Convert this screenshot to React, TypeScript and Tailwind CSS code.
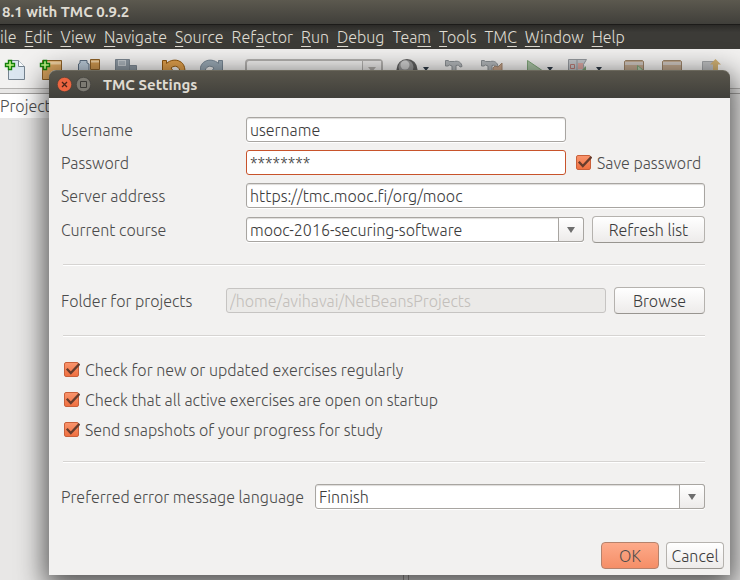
import React from "react";

const font = "font-['Ubuntu','Open_Sans','Noto_Sans',sans-serif]";

const menus: [string, string, string][] = [
  ["", "", "ile"],
  ["", "E", "dit"],
  ["", "V", "iew"],
  ["", "N", "avigate"],
  ["", "S", "ource"],
  ["Ref", "a", "ctor"],
  ["", "R", "un"],
  ["", "D", "ebug"],
  ["Tea", "m", ""],
  ["", "T", "ools"],
  ["TM", "C", ""],
  ["", "W", "indow"],
  ["", "H", "elp"],
];

const field =
  "block h-[25px] w-full min-w-0 rounded-[3px] border border-[#a8a5a1] bg-white px-[3px] text-base font-light text-[#3c3c3c] shadow-[inset_0_1px_1px_#dddbd9,0_1px_0_#fff] outline-none";

const button =
  "h-[27px] rounded-[4px] border border-[#b5b2ae] border-b-[#989590] bg-gradient-to-b from-white to-[#edebea] text-base font-light leading-5 text-[#3c3c3c]";

function ToolButton({ label, className, children }: { label: string; className: string; children: React.ReactNode }) {
  return (
    <button type="button" aria-label={label} className={`h-6 shrink-0 ${className}`}>
      <svg viewBox="0 0 24 24" className="h-6 w-6" fill="none">
        {children}
      </svg>
    </button>
  );
}

function MenuArrow({ label, className }: { label: string; className: string }) {
  return (
    <button type="button" aria-label={label} className={`h-6 w-[6px] shrink-0 ${className}`}>
      <svg viewBox="0 0 6 24" className="h-6 w-[6px]">
        <path d="M0 8h6L3 12z" fill="#2f3b47" />
      </svg>
    </button>
  );
}

function Plus() {
  return <path d="M4.500 1.500h3v3h3v3h-3v3h-3v-3h-3v-3h3z" fill="#c3f28a" stroke="#12800a" strokeWidth="1.400" />;
}

function Hammer() {
  return (
    <path
      d="M1.500 1.500h2.500l1.500 1h5c4-1 7 1 7.500 5l-2 .5c-1-2-2-2-4-1.500V20H8V7L5.500 6 4 7H1.500z"
      fill="#b3b7ba"
      stroke="#8b9094"
    />
  );
}

function Combo({ id, options }: { id: string; options: string[] }) {
  return (
    <div className="relative w-full min-w-0">
      <select id={id} className={`${field} appearance-none`}>
        {options.map((o) => (
          <option key={o}>{o}</option>
        ))}
      </select>
      <span className="pointer-events-none absolute inset-y-0 right-0 flex w-[26px] items-center justify-center rounded-r-[3px] border border-[#a8a5a1] bg-gradient-to-b from-white to-[#edebea]">
        <svg viewBox="0 0 8 6" className="mt-px h-[6px] w-2">
          <path d="M0 0h8L4 6z" fill="#6e6e6e" />
        </svg>
      </span>
    </div>
  );
}

function Check({ id, label }: { id: string; label: string }) {
  return (
    <label htmlFor={id} className="flex items-center gap-[5px] whitespace-nowrap">
      <span className="relative block h-4 w-4 shrink-0">
        <input
          id={id}
          type="checkbox"
          defaultChecked
          className="block h-[15px] w-[15px] appearance-none rounded-[2px] border border-[#c9603a] bg-gradient-to-b from-[#f9946c] to-[#ef7040]"
        />
        <svg viewBox="0 0 16 16" className="pointer-events-none absolute inset-0" fill="none">
          <path d="M2.800 6.800L6.800 11 15.500 1.800" stroke="#673c2c" strokeWidth="2.300" />
        </svg>
      </span>
      {label}
    </label>
  );
}

function Separator() {
  return <hr className="ml-0.5 h-[2px] border-0 border-t border-[#d6d4d2] bg-white" />;
}

export default function App() {
  return (
    <div className={`relative flex h-screen flex-col overflow-hidden bg-[#e8e7e6] text-base font-light leading-5 ${font}`}>
      <header className="flex h-6 shrink-0 items-center bg-gradient-to-b from-[#5c594f] to-[#403f3a] pl-0.5 text-[15px] font-bold text-[#dfdbd2]">
        8.1 with TMC 0.9.2
      </header>
      <nav className="flex h-[25px] shrink-0 items-center gap-2 border-t border-[#1c1b19] bg-gradient-to-b from-[#2b2a27] via-[#3c3b37] via-30% to-[#3c3b37] leading-[22px] text-[#dfdbd2]">
        {menus.map(([a, b, c]) => (
          <button key={a + b + c} type="button" className="whitespace-nowrap">
            {a}
            <span className="underline underline-offset-[3px]">{b}</span>
            {c}
          </button>
        ))}
      </nav>
      <div className="flex h-10 shrink-0 items-start overflow-hidden border-b border-[#b5b3b1] bg-[#f2f1f0] pt-[10px]">
        <ToolButton label="New file" className="ml-1">
          <path d="M4.500 1.500h10l6 6v13h-16z" fill="#dbe6f0" stroke="#75838f" />
          <path d="M14.500 1.500v6h6" fill="#f8fbfd" stroke="#75838f" />
          <Plus />
        </ToolButton>
        <ToolButton label="New project" className="ml-[11px]">
          <path d="M3.500 1.500h19v19h-19z" fill="#d9a45f" stroke="#8e6127" />
          <path d="M4 2.500h18v3H4z" fill="#efd0a1" />
          <Plus />
        </ToolButton>
        <ToolButton label="Open project" className="ml-[14px]">
          <path d="M1.500 20V5l1.500-1V1.500h7V4l2 1v15z" fill="#bccbd9" stroke="#5d6f82" />
          <path d="M13.500.500h9v10h-9z" fill="#cf9850" stroke="#8e6127" />
          <path d="M14 1.500h8v2h-8z" fill="#efd0a1" />
        </ToolButton>
        <ToolButton label="Save all" className="ml-[14px]">
          <path d="M.5.500h14v20H.5zM14.500 6.500h7V20h-7z" fill="#8d98a2" stroke="#7c8791" />
          <path d="M3 1h8v6H3z" fill="#c6ccd1" />
          <path d="M4 3h6M4 5h6" stroke="#8d98a2" />
        </ToolButton>
        <ToolButton label="Undo" className="ml-[23px]">
          <path d="M.5 1.500h4v3C8 1 14 0 18 2.500c4 2 5 6 5 11h-5c0-6-5-8-9-4.500l3 4H.5z" fill="#e0a04c" stroke="#925910" />
        </ToolButton>
        <ToolButton label="Redo" className="ml-[14px]">
          <path d="M22.500 1.500h-4v3C15 1 9 0 5 2.500c-4 2-5 6-5 11h5c0-6 5-8 9-4.500l-3 4h11.500z" fill="#9aa9b5" stroke="#778693" />
        </ToolButton>
        <div className="relative ml-[21px] w-[138px] shrink-0">
          <select
            aria-label="Configuration"
            className="block h-6 w-full appearance-none rounded-[4px] border-2 border-[#b3b1af] bg-[#f2f1f0]"
          />
          <span className="pointer-events-none absolute inset-y-0.5 right-0.5 flex w-[19px] justify-center border-l border-[#b3b1af] bg-[#eceae9] pt-[6px]">
            <svg viewBox="0 0 8 5" className="h-[5px] w-2">
              <path d="M0 0h8L4 5z" fill="#b0aca8" />
            </svg>
          </span>
        </div>
        <ToolButton label="Globe" className="ml-[13px]">
          <circle cx="11" cy="10.500" r="10.500" fill="#5e5e5e" />
          <ellipse cx="10" cy="8" rx="7.500" ry="7" fill="#969696" />
          <ellipse cx="9" cy="6" rx="4.500" ry="4.500" fill="#cfcfcf" />
        </ToolButton>
        <MenuArrow label="Globe options" className="ml-[3px]" />
        <ToolButton label="Build" className="ml-[15px]">
          <Hammer />
        </ToolButton>
        <ToolButton label="Clean and build" className="ml-[12px]">
          <Hammer />
          <path d="M13 20V9l2-2 3 1 4-4v16z" fill="#c9a58a" stroke="#a58972" />
        </ToolButton>
        <ToolButton label="Run" className="ml-[22px]">
          <path d="M1.500 1.500v19l14-9.500z" fill="#a9c3a4" stroke="#7fa579" />
        </ToolButton>
        <MenuArrow label="Run options" className="-ml-[3px]" />
        <ToolButton label="Debug" className="ml-[15px]">
          <path d="M.5.500h18l-3 5 2 15H.5z" fill="#c4c7cb" stroke="#95999e" />
          <path d="M2.500 5.500h4v4h-4z" stroke="#b97a74" />
          <path d="M9 1v19" stroke="#95999e" />
          <path d="M10 4h5v6h-5z" fill="#dba7a2" />
          <path d="M14 11l4-4v6z" fill="#7fa579" />
        </ToolButton>
        <MenuArrow label="Debug options" className="ml-1" />
        <ToolButton label="Submit" className="ml-[22px]">
          <path d="M.5 2.500l1-1h17l1 1v18H.5z" fill="#c0a88f" stroke="#9b8369" />
          <path d="M1 3h18v3H1z" fill="#cfc7c0" />
          <path d="M13.500 6.500v8l5-4z" fill="#b5cfae" stroke="#7fa579" />
        </ToolButton>
        <ToolButton label="Download" className="ml-[14px]">
          <path d="M.5 2.500l1-1h17l1 1v18H.5z" fill="#c0a88f" stroke="#9b8369" />
          <path d="M1 3h18v3H1z" fill="#cfc7c0" />
        </ToolButton>
        <ToolButton label="Upload" className="ml-[15px]">
          <path d="M1.500 2.500h14v18h-14z" fill="#bfc0c2" stroke="#a3a5a8" />
          <path d="M14.500 0L20 5.500h-3V20h-5V5.500H9z" fill="#d0b072" />
        </ToolButton>
      </div>
      <div className="flex h-[29px] shrink-0 pt-1">
        <div className="flex w-[403px] items-center border-t border-[#a5a3a1] bg-white text-[#4c4c4c]">Projects</div>
        <div className="flex-1 border-t border-[#a5a3a1]" />
      </div>
      <main className="flex flex-1">
        <div className="w-[404px] border-r border-[#a5a3a1]" />
        <div className="ml-1 flex-1 border-l border-[#a5a3a1]" />
      </main>

      <section
        role="dialog"
        aria-labelledby="dialog-title"
        className="absolute bottom-[5px] left-[49px] right-[10px] top-[70px] flex flex-col rounded-t-[7px] bg-[#f2f1f0] text-[#4c4c4c] shadow-[0_8px_28px_4px_rgba(0,0,0,0.65)]"
      >
        <div className="flex h-7 shrink-0 items-center gap-1 rounded-t-[7px] border-t border-[#6b685c] bg-gradient-to-b from-[#59564c] to-[#403f3a] pl-2">
          <button type="button" aria-label="Close" className="h-[15px] w-[15px]">
            <svg viewBox="0 0 15 15">
              <circle cx="7.500" cy="7.500" r="7.200" fill="#ed6540" stroke="#4a3a31" strokeWidth=".6" />
              <path d="M5 5l5 5M10 5l-5 5" stroke="#4a2418" strokeWidth="1.300" />
            </svg>
          </button>
          <button type="button" aria-label="Maximize" className="h-[15px] w-[15px]">
            <svg viewBox="0 0 15 15">
              <circle cx="7.500" cy="7.500" r="7.200" fill="#7c7a72" stroke="#3a3935" strokeWidth=".6" />
              <path d="M4.500 4.500h6v6h-6z" fill="none" stroke="#3a3935" />
            </svg>
          </button>
          <h1 id="dialog-title" className="ml-2 text-[15px] font-bold text-[#dfdbd2]">TMC Settings</h1>
        </div>
        <form className="flex flex-1 flex-col pl-3 pr-[6px] pt-[19px]">
          <div className="mr-[19px] flex flex-col">
            <div className="grid grid-cols-[185px_minmax(0,1fr)] items-center gap-y-2">
              <label htmlFor="username">Username</label>
              <div className="mr-[139px]">
                <input id="username" type="text" defaultValue="username" className={field} />
              </div>
              <label htmlFor="password">Password</label>
              <div className="flex items-center gap-[10px]">
                <input
                  id="password"
                  type="text"
                  autoComplete="off"
                  defaultValue="********"
                  className="block h-[25px] min-w-0 flex-1 rounded-[3px] border border-[#c8532b] bg-white px-[3px] text-base font-light text-[#3c3c3c] outline-none"
                />
                <div className="w-[129px]">
                  <Check id="save" label="Save password" />
                </div>
              </div>
              <label htmlFor="server">Server address</label>
              <input id="server" type="text" defaultValue="https://tmc.mooc.fi/org/mooc" className={field} />
              <label htmlFor="course">Current course</label>
              <div className="flex items-center gap-2">
                <Combo id="course" options={["mooc-2016-securing-software"]} />
                <button type="button" className={`${button} w-[113px] shrink-0`}>Refresh list</button>
              </div>
            </div>
            <div className="py-[21px]"><Separator /></div>
            <div className="flex items-center">
              <label htmlFor="folder" className="w-[165px] shrink-0">Folder for projects</label>
              <input
                id="folder"
                type="text"
                disabled
                defaultValue="/home/avihavai/NetBeansProjects"
                className="block h-[25px] min-w-0 flex-1 rounded-[3px] border border-[#c6c4c2] bg-[#ebeae8] px-[3px] text-base font-light text-[#c3bfbb]"
              />
              <button type="button" className={`${button} ml-2 w-[91px] shrink-0`}>Browse</button>
            </div>
            <div className="py-[21px]"><Separator /></div>
            <div className="flex flex-col gap-[10px] pl-[3px] pt-[2px]">
              <Check id="updates" label="Check for new or updated exercises regularly" />
              <Check id="active" label="Check that all active exercises are open on startup" />
              <Check id="snapshots" label="Send snapshots of your progress for study" />
            </div>
            <div className="py-[21px]"><Separator /></div>
            <div className="flex items-center">
              <label htmlFor="language" className="w-[254px] shrink-0 whitespace-nowrap">Preferred error message language</label>
              <Combo id="language" options={["Finnish"]} />
            </div>
          </div>
          <div className="mb-[6px] mt-auto flex justify-end gap-[7px]">
            <button type="submit" className="h-[27px] w-[58px] rounded-[4px] border border-[#b5826c] bg-gradient-to-b from-[#fdaa8a] to-[#f58e67]">OK</button>
            <button type="button" className={`${button} w-[58px]`}>Cancel</button>
          </div>
        </form>
      </section>
    </div>
  );
}
